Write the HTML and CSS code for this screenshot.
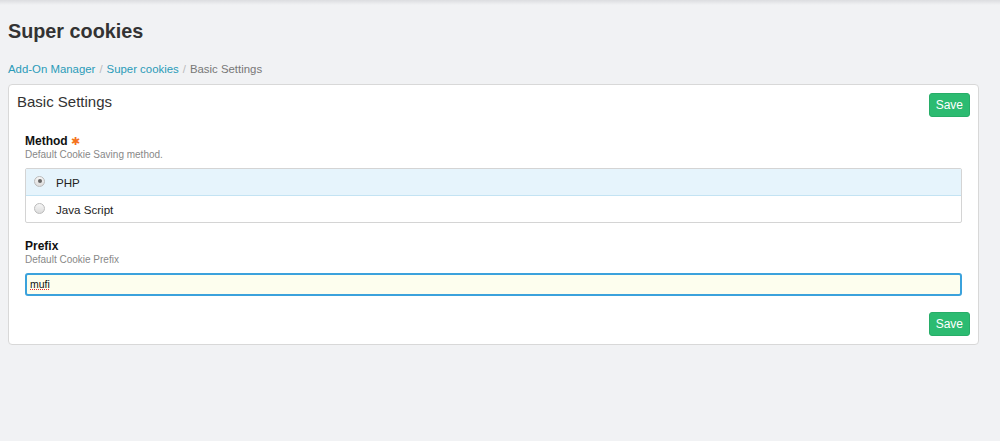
FILE: index.html
```html
<!DOCTYPE html>
<html>
<head>
<meta charset="utf-8">
<link rel="stylesheet" href="styles.css">
</head>
<body>
<div class="topbar"></div>
<div class="page">
  <h1 class="title">Super cookies</h1>
  <div class="crumbs">
    <a class="crumb-link" href="#">Add-On Manager</a><span class="sep">/</span><a class="crumb-link" href="#">Super cookies</a><span class="sep">/</span><span class="crumb-current">Basic Settings</span>
  </div>
  <div class="card">
    <div class="card-head">
      <h2 class="card-title">Basic Settings</h2>
      <button class="btn-save">Save</button>
    </div>
    <div class="field first">
      <div class="label">Method <span class="req">&#10033;</span></div>
      <div class="desc">Default Cookie Saving method.</div>
      <div class="radio-list">
        <label class="radio-row selected"><span class="radio checked"></span><span class="radio-text">PHP</span></label>
        <label class="radio-row"><span class="radio"></span><span class="radio-text">Java Script</span></label>
      </div>
    </div>
    <div class="field">
      <div class="label">Prefix</div>
      <div class="desc">Default Cookie Prefix</div>
      <div class="input"><span class="spell">mufi</span></div>
    </div>
    <div class="card-foot">
      <button class="btn-save">Save</button>
    </div>
  </div>
</div>
</body>
</html>
```
FILE: styles.css
```css
html, body {
  margin: 0;
  padding: 0;
}
body {
  background: #f1f2f4;
  font-family: "Liberation Sans", Arial, sans-serif;
  color: #333;
  height: 441px;
  overflow: hidden;
}
.topbar {
  height: 5px;
  background: linear-gradient(#dcdde0, #f1f2f4);
}
.page {
  padding: 0 21px 0 8px;
}
.title {
  margin: 14px 0 0;
  font-size: 19.8px;
  line-height: 24px;
  font-weight: bold;
  color: #333;
}
.crumbs {
  margin-top: 19px;
  font-size: 11.4px;
  line-height: 15px;
  color: #888;
}
.crumb-link {
  color: #2a9bb8;
  text-decoration: none;
}
.sep {
  color: #bbb;
  margin: 0 4px;
}
.crumb-current {
  color: #777;
}
.card {
  margin-top: 7px;
  background: #fff;
  border: 1px solid #d8d8d8;
  border-radius: 4px;
  padding: 0 16px 8px 16px;
}
.card-head {
  display: flex;
  justify-content: space-between;
  align-items: flex-start;
  margin-right: -8px;
  margin-left: -8px;
  padding-top: 8px;
}
.card-title {
  margin: 0;
  font-size: 15px;
  line-height: 18px;
  font-weight: normal;
  color: #333;
}
.btn-save {
  font-family: "Liberation Sans", Arial, sans-serif;
  font-size: 12px;
  line-height: 16px;
  height: 24px;
  padding: 0 6px;
  color: #fff;
  background: #2cbb71;
  border: 1px solid #27ad68;
  border-radius: 3px;
}
.field {
  margin-top: 16px;
}
.field.first {
  margin-top: 17px;
}
.label {
  font-size: 12px;
  line-height: 14px;
  font-weight: bold;
  color: #111;
}
.req {
  color: #f47320;
  font-size: 11px;
  font-weight: normal;
}
.desc {
  font-size: 10px;
  line-height: 12px;
  color: #888;
  margin-top: 1px;
}
.radio-list {
  margin-top: 7px;
  border: 1px solid #d4d4d4;
  border-radius: 2px;
}
.radio-row {
  display: flex;
  align-items: center;
  height: 26px;
  padding-left: 8px;
  font-size: 11.6px;
  color: #222;
}
.radio-row.selected {
  background: #e6f4fc;
  border-bottom: 1px solid #c3e3f3;
}
.radio {
  width: 9px;
  height: 9px;
  border-radius: 50%;
  border: 1px solid #bbb;
  background: linear-gradient(#f6f6f6, #dcdcdc);
  box-sizing: content-box;
  position: relative;
  margin-top: -2px;
}
.radio.checked::after {
  content: "";
  position: absolute;
  left: 2.5px;
  top: 2.5px;
  width: 4px;
  height: 4px;
  border-radius: 50%;
  background: #666;
}
.radio-text {
  margin-left: 11px;
}
.input {
  margin-top: 7px;
  height: 19px;
  border: 2px solid #3ba2dc;
  border-radius: 3px;
  background: #fdfeee;
  font-size: 10.5px;
  line-height: 19px;
  padding-left: 3px;
  color: #111;
}
.spell {
  text-decoration: underline dotted #e03030;
  text-decoration-thickness: 1px;
  text-underline-offset: 1px;
}
.card-foot {
  display: flex;
  justify-content: flex-end;
  margin-right: -8px;
  margin-top: 16px;
}
```
